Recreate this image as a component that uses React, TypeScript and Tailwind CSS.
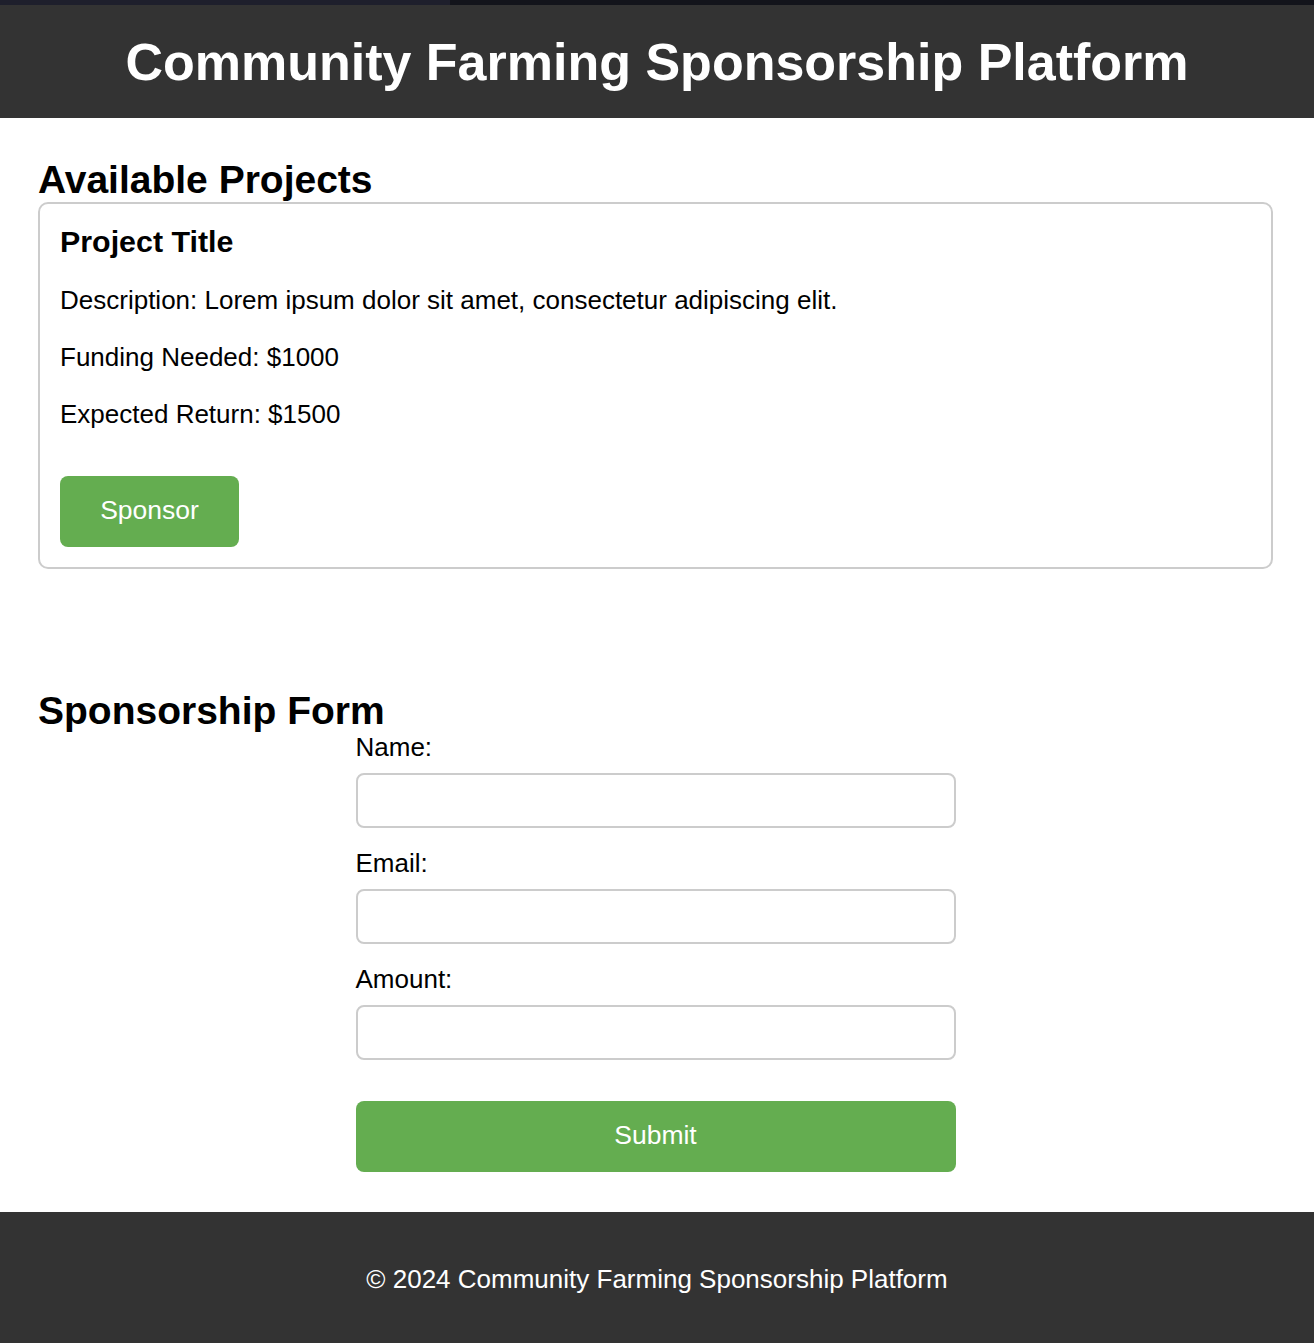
import React from "react";

const font = { fontFamily: '"Liberation Sans", Arial, sans-serif' };

const Field = ({ label, type, first }: { label: string; type: string; first?: boolean }) => (
  <div className={first ? "" : "mt-[21px]"}>
    <label className="block text-[26px] leading-[29px] text-black">{label}</label>
    <input
      type={type}
      className="mt-[11px] block h-[55px] w-full rounded-[8px] border-2 border-[#cccccc] bg-white px-4 text-[26px] outline-none"
    />
  </div>
);

const App = () => {
  return (
    <div className="min-h-[1343px] bg-white text-black" style={font}>
      {/* top strip */}
      <div className="flex h-[5px]">
        <div className="w-[450px] bg-[#1e1f2c]" />
        <div className="flex-1 bg-[#13141b]" />
      </div>

      {/* Header */}
      <header className="flex h-[113px] items-center justify-center bg-[#333333]">
        <h1 className="text-[52px] font-bold leading-none text-white">
          Community Farming Sponsorship Platform
        </h1>
      </header>

      <main className="pl-[38px] pr-[41px] pt-[40px]">
        {/* Projects */}
        <section>
          <h2 className="text-[39px] font-bold leading-[44px]">Available Projects</h2>
          <div className="rounded-[10px] border-2 border-[#cccccc] pl-[20px] pr-[19px] pt-[20px] pb-[20px]">
            <h3 className="text-[30.4px] font-bold leading-[34.5px]">Project Title</h3>
            <p className="mt-[27px] text-[26px] leading-[29px]">
              Description: Lorem ipsum dolor sit amet, consectetur adipiscing elit.
            </p>
            <p className="mt-[28px] text-[26px] leading-[29px]">Funding Needed: $1000</p>
            <p className="mt-[28px] text-[26px] leading-[29px]">Expected Return: $1500</p>
            <button className="mt-[47px] flex h-[71px] w-[179px] items-center justify-center rounded-[8px] bg-[#64ad50] text-[26.5px] text-white">
              Sponsor
            </button>
          </div>
        </section>

        {/* Form */}
        <section className="mt-[120px] pb-[40px]">
          <h2 className="text-[39px] font-bold leading-[44px]">Sponsorship Form</h2>
          <form className="mx-auto w-[600px]" onSubmit={(e) => e.preventDefault()}>
            <Field label="Name:" type="text" first />
            <Field label="Email:" type="email" />
            <Field label="Amount:" type="number" />
            <button
              type="submit"
              className="mt-[41px] flex h-[71px] w-full items-center justify-center rounded-[8px] bg-[#64ad50] text-[26.5px] text-white"
            >
              Submit
            </button>
          </form>
        </section>
      </main>

      {/* Footer */}
      <footer className="flex h-[131px] items-center justify-center bg-[#333333] pt-[5px]">
        <p className="text-[26px] leading-[29px] text-white">
          © 2024 Community Farming Sponsorship Platform
        </p>
      </footer>
    </div>
  );
};

export default App;
